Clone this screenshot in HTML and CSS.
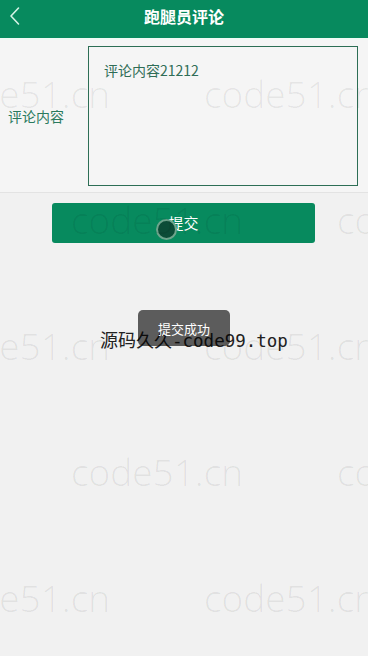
FILE: index.html
```html
<!DOCTYPE html>
<html lang="zh">
<head>
<meta charset="utf-8">
<title>跑腿员评论</title>
<link rel="stylesheet" href="styles.css">
</head>
<body>
<div class="page">
  <header class="topbar">
    <svg class="back" width="14" height="20" viewBox="0 0 14 20"><path d="M10.5 2 L3 10 L10.5 18" fill="none" stroke="#d6f3e6" stroke-width="1.6" stroke-linecap="round" stroke-linejoin="round"/></svg>
    <h1 class="title">跑腿员评论</h1>
  </header>
  <div class="strip"></div>
  <section class="form">
    <label class="label">评论内容</label>
    <div class="area">评论内容21212</div>
  </section>
  <div class="actions">
    <button class="submit">提交<span class="ripple"></span></button>
  </div>
</div>
<div class="promo">源码久久<span class="mono">-code99.top</span></div>
<div class="toast">提交成功</div>
<div class="wm">
  <span style="left:-62px;top:73px">code51.cn</span>
  <span style="left:204px;top:73px">code51.cn</span>
  <span style="left:71px;top:199px">code51.cn</span>
  <span style="left:337px;top:199px">code51.cn</span>
  <span style="left:-62px;top:325px">code51.cn</span>
  <span style="left:204px;top:325px">code51.cn</span>
  <span style="left:71px;top:451px">code51.cn</span>
  <span style="left:337px;top:451px">code51.cn</span>
  <span style="left:-62px;top:577px">code51.cn</span>
  <span style="left:204px;top:577px">code51.cn</span>
</div>
</body>
</html>
```
FILE: styles.css
```css
* { box-sizing: border-box; margin: 0; padding: 0; }
html, body { width: 368px; height: 656px; overflow: hidden; }
body {
  background: #f1f1f1;
  font-family: "Noto Sans CJK SC", "Noto Sans", sans-serif;
  position: relative;
}
.topbar {
  height: 38px;
  background: #078a5e;
  display: flex;
  align-items: center;
  justify-content: center;
  position: relative;
}
.back { position: absolute; left: 8px; top: 6px; }
.title {
  color: #ffffff;
  font-size: 16px;
  font-weight: 700;
  line-height: 1;
  margin-top: -6px;
}
.strip { height: 2px; background: #eefaf5; }
.form {
  background: #f5f5f5;
  border-bottom: 1px solid #e3e3e3;
  display: flex;
  align-items: center;
  padding: 6px 10px 6px 8px;
  height: 153px;
}
.label {
  width: 80px;
  font-size: 14px;
  color: #2a7a5e;
  line-height: 20px;
}
.area {
  flex: 1;
  height: 140px;
  border: 1px solid #2d6e55;
  padding: 12px 15px;
  font-size: 14px;
  line-height: 22px;
  color: #2f6d56;
}
.actions {
  display: flex;
  justify-content: center;
  padding: 10px 0 0 0;
}
.submit {
  width: 263px;
  height: 40px;
  margin-left: -1px;
  border: none;
  border-radius: 3px;
  background: #078a5e;
  color: #ffffff;
  font-family: "Noto Sans CJK SC", sans-serif;
  font-size: 15px;
  line-height: 1;
  padding-bottom: 2px;
  position: relative;
}
.ripple {
  position: absolute;
  left: 104px;
  top: 16px;
  width: 21px;
  height: 21px;
  border-radius: 50%;
  background: #0c4c37;
  border: 2px solid #6ea48c;
}
.promo {
  position: absolute;
  left: 100px;
  top: 327px;
  font-size: 18px;
  line-height: 24px;
  color: #222;
  font-family: "Noto Sans CJK SC", sans-serif;
}
.mono { font-family: "DejaVu Sans Mono", monospace; font-size: 17.5px; }
.toast {
  position: absolute;
  left: 138px;
  top: 310px;
  width: 92px;
  height: 36px;
  border-radius: 5px;
  background: rgba(0, 0, 0, 0.62);
  color: #fff;
  font-size: 13px;
  display: flex;
  align-items: center;
  justify-content: center;
}
.wm { position: absolute; inset: 0; pointer-events: none; }
.wm span {
  position: absolute;
  font-family: "Open Sans", sans-serif;
  font-weight: 300;
  font-size: 37px;
  line-height: 42px;
  color: rgba(0, 0, 0, 0.07);
  white-space: nowrap;
}
```
